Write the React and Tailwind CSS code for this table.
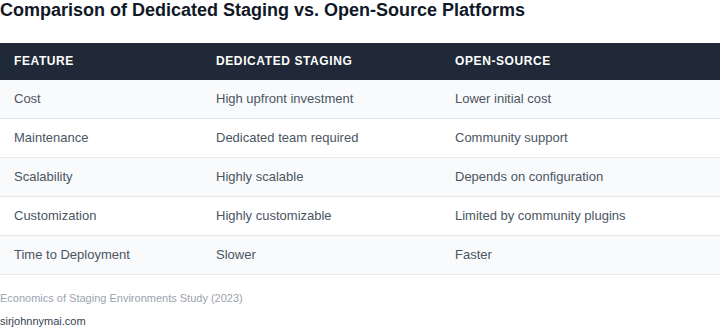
import React from 'react';

const rows = [
  ['Cost', 'High upfront investment', 'Lower initial cost'],
  ['Maintenance', 'Dedicated team required', 'Community support'],
  ['Scalability', 'Highly scalable', 'Depends on configuration'],
  ['Customization', 'Highly customizable', 'Limited by community plugins'],
  ['Time to Deployment', 'Slower', 'Faster'],
];

export default function App() {
  return (
    <div className="w-[720px] bg-white font-['Liberation_Sans',Arial,sans-serif]">
      <h1 className="text-[18px] font-bold leading-[21px] text-[#111827]">
        Comparison of Dedicated Staging vs. Open-Source Platforms
      </h1>

      <table className="mt-[22px] w-full border-collapse text-left">
        <thead>
          <tr className="border-b border-[#1f2937] bg-[#1f2937] text-white">
            <th className="w-[202px] px-[14px] py-3 text-[12px] font-bold leading-[12px] uppercase tracking-[0.05em]">Feature</th>
            <th className="w-[239px] px-[14px] py-3 text-[12px] font-bold leading-[12px] uppercase tracking-[0.05em]">Dedicated Staging</th>
            <th className="px-[14px] py-3 text-[12px] font-bold leading-[12px] uppercase tracking-[0.05em]">Open-Source</th>
          </tr>
        </thead>
        <tbody>
          {rows.map((row, i) => (
            <tr key={row[0]} className={`border-b border-[#e5e7eb] ${i % 2 === 0 ? 'bg-[#f9fafb]' : 'bg-white'}`}>
              {row.map((cell) => (
                <td key={cell} className="px-[14px] py-3 text-[13px] leading-[14px] text-[#4b5563]">{cell}</td>
              ))}
            </tr>
          ))}
        </tbody>
      </table>

      <p className="mt-[15px] text-[11px] leading-[16px] text-[#9ca3af]">Economics of Staging Environments Study (2023)</p>
      <p className="mt-[7px] text-[11px] leading-[16px] text-[#374151]">sirjohnnymai.com</p>
    </div>
  );
}
